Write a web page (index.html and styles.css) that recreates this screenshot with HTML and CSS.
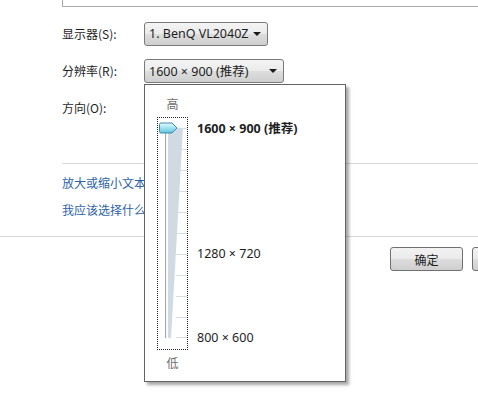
FILE: index.html
```html
<!DOCTYPE html>
<html lang="zh-CN">
<head>
    <meta charset="UTF-8">
    <title>屏幕分辨率</title>
    <link rel="stylesheet" href="styles.css">
</head>
<body>

    <div class="page">
        <div class="preview-box"></div>

        <div class="settings">
            <div class="row">
                <span class="label">显示器(S):</span>
                <div class="select select-monitor">1. BenQ VL2040Z <span class="arrow"></span></div>
            </div>
            <div class="row">
                <span class="label">分辨率(R):</span>
                <div class="select select-res">1600 × 900 (推荐) <span class="arrow"></span></div>
            </div>
            <div class="row">
                <span class="label">方向(O):</span>
            </div>
        </div>

        <div class="sep"></div>

        <div class="links">
            <a href="#">放大或缩小文本和其他项目</a>
            <a href="#">我应该选择什么显示器设置?</a>
        </div>

        <div class="sep full"></div>

        <div class="buttons">
            <button>确定</button>
            <button class="cut"></button>
        </div>

        <!-- 分辨率下拉滑块 -->
        <div class="popup">
            <div class="slider-col">
                <span class="end">高</span>
                <div class="slider">
                    <svg width="29" height="231" viewBox="0 0 29 231">
                        <g stroke="#d6dde4" stroke-width="1">
                            <line x1="18" y1="10.5" x2="29" y2="10.5"/>
                            <line x1="18" y1="31.5" x2="29" y2="31.5"/>
                            <line x1="18" y1="52.5" x2="29" y2="52.5"/>
                            <line x1="18" y1="73.5" x2="29" y2="73.5"/>
                            <line x1="18" y1="94.5" x2="29" y2="94.5"/>
                            <line x1="18" y1="115.5" x2="29" y2="115.5"/>
                            <line x1="18" y1="136.5" x2="29" y2="136.5"/>
                            <line x1="18" y1="157.5" x2="29" y2="157.5"/>
                            <line x1="18" y1="178.5" x2="29" y2="178.5"/>
                            <line x1="18" y1="199.5" x2="29" y2="199.5"/>
                            <line x1="18" y1="219.5" x2="29" y2="219.5"/>
                        </g>
                        <polygon points="10,10 25,10 13,220 10,220" fill="#d0dae3"/>
                        <line x1="7.5" y1="8" x2="7.5" y2="220" stroke="#a9a9a9" stroke-width="1"/>
                        <line x1="8.5" y1="8" x2="8.5" y2="220" stroke="#f4f4f4" stroke-width="1"/>
                        <defs>
                            <linearGradient id="thumb" x1="0" y1="0" x2="0" y2="1">
                                <stop offset="0" stop-color="#e6fbff"/>
                                <stop offset="0.5" stop-color="#9fe2f2"/>
                                <stop offset="1" stop-color="#5cc3dc"/>
                            </linearGradient>
                        </defs>
                        <path d="M1.5 6.5 Q1.5 5 3 5 H14 L19 10 L14 15 H3 Q1.5 15 1.5 13.5 Z" fill="url(#thumb)" stroke="#3e8aa6" stroke-width="1"/>
                    </svg>
                </div>
                <span class="end">低</span>
            </div>
            <div class="res-list">
                <span class="res current">1600 × 900 (推荐)</span>
                <span class="res mid">1280 × 720</span>
                <span class="res low">800 × 600</span>
            </div>
        </div>
    </div>

</body>
</html>
```

FILE: styles.css
```css
body {
    margin: 0;
    background-color: white;
    font-family: "Noto Sans", "Noto Sans CJK SC", sans-serif;
    font-size: 12px;
    color: #1e1e1e;
    overflow: hidden;
}

.page {
    position: relative;
    width: 478px;
    height: 393px;
    overflow: hidden;
}

.preview-box {
    height: 6px;
    margin-left: 62px;
    border-left: 1px solid #a8a8a8;
    border-bottom: 1px solid #a8a8a8;
}

.settings {
    display: flex;
    flex-direction: column;
    gap: 14px;
    margin-top: 15px;
    padding-left: 62px;
}

.row {
    display: flex;
    align-items: center;
    height: 23px;
}

.label {
    width: 82px;
    font-family: "Noto Sans CJK SC", sans-serif;
    font-size: 12px;
}

.select {
    display: flex;
    align-items: center;
    justify-content: space-between;
    box-sizing: border-box;
    height: 24px;
    padding: 0 6px 0 4px;
    border: 1px solid #7a7a7a;
    border-radius: 3px;
    background: linear-gradient(#f4f4f4, #ebebeb 50%, #dddddd 51%, #cfcfcf);
    font-size: 12.5px;
    white-space: nowrap;
}

.select-monitor {
    width: 124px;
}

.select-res {
    width: 140px;
}

.arrow {
    width: 0;
    height: 0;
    border-left: 4px solid transparent;
    border-right: 4px solid transparent;
    border-top: 4px solid #1a1a1a;
}

.sep {
    height: 1px;
    margin: 44px 0 0 62px;
    background-color: #d8d8d8;
}

.sep.full {
    margin: 0;
}

.links {
    display: flex;
    flex-direction: column;
    gap: 11px;
    padding: 11px 0 18px 62px;
}

.links a {
    color: #2d63a8;
    text-decoration: none;
    font-family: "Noto Sans CJK SC", sans-serif;
    line-height: 16px;
    white-space: nowrap;
}

.buttons {
    display: flex;
    gap: 9px;
    padding: 10px 0 0 390px;
}

.buttons button {
    flex: none;
    width: 73px;
    height: 24px;
    border: 1px solid #707070;
    border-radius: 3px;
    background: linear-gradient(#f2f2f2, #ebebeb 50%, #dddddd 51%, #cfcfcf);
    font-family: "Noto Sans CJK SC", sans-serif;
    font-size: 12px;
    color: #1e1e1e;
    padding: 0;
}

.popup {
    position: absolute;
    left: 144px;
    top: 84px;
    width: 188px;
    height: 296px;
    display: flex;
    gap: 9px;
    padding-left: 12px;
    background-color: white;
    border: 1px solid #646464;
    box-shadow: 3px 3px 3px rgba(0, 0, 0, 0.35);
}

.slider-col {
    display: flex;
    flex-direction: column;
    align-items: center;
    width: 31px;
}

.end {
    font-family: "Noto Sans CJK SC", sans-serif;
    color: #6d6d6d;
    font-size: 12px;
    line-height: 16px;
}

.slider-col .end:first-child {
    margin: 11px 0 5px;
}

.slider-col .end:last-child {
    margin-top: 5px;
}

.slider {
    width: 29px;
    height: 231px;
    border: 1px dotted #222;
}

.slider svg {
    display: block;
}

.res-list {
    display: flex;
    flex-direction: column;
    padding-top: 36px;
}

.res {
    line-height: 16px;
    font-size: 12.5px;
    white-space: nowrap;
}

.res.current {
    font-weight: bold;
}

.res.mid {
    margin-top: 109px;
}

.res.low {
    margin-top: 68px;
}
```
